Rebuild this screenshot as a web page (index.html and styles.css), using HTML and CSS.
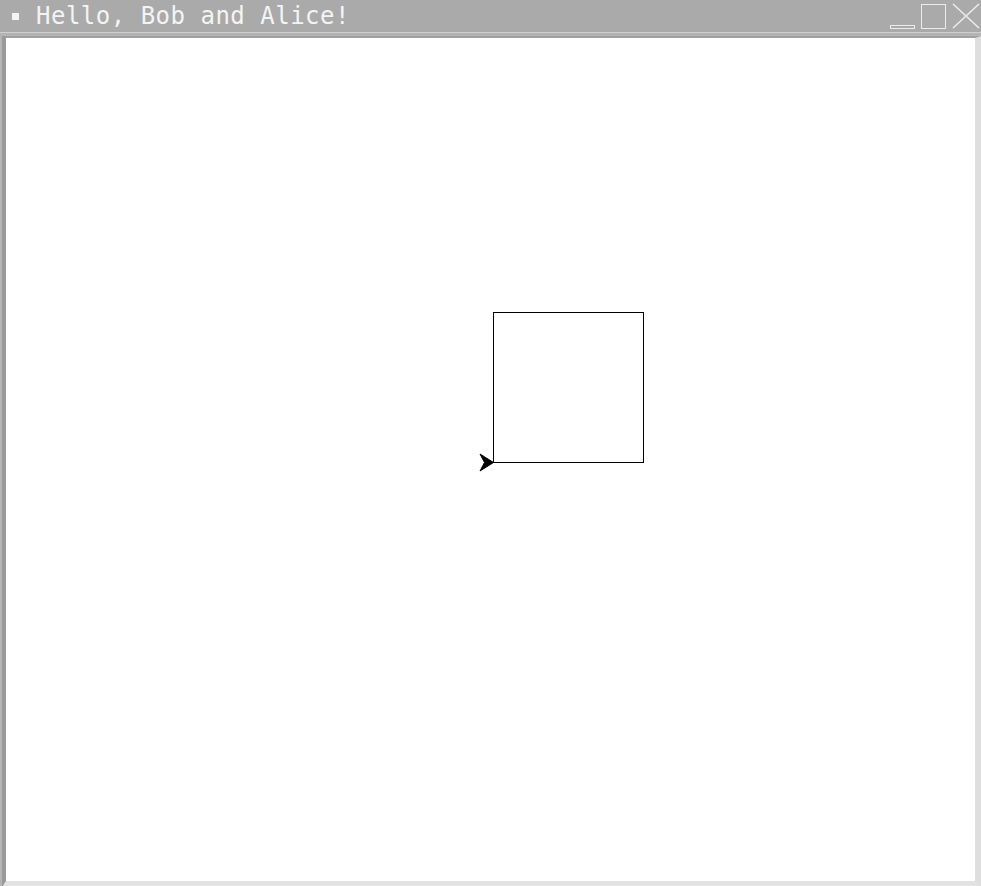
FILE: index.html
```html
<!DOCTYPE html>
<html>
<head>
<meta charset="utf-8">
<link rel="stylesheet" href="styles.css">
</head>
<body>
<div class="window">
  <div class="titlebar">
    <span class="bullet"></span>
    <span class="title">Hello, Bob and Alice!</span>
    <div class="buttons">
      <span class="btn-min"></span>
      <span class="btn-max"></span>
      <svg class="btn-close" width="28" height="26" viewBox="0 0 28 26"><path d="M1 1 L27 25 M27 1 L1 25" stroke="#ececec" stroke-width="1.5" fill="none"/></svg>
    </div>
  </div>
  <div class="frame">
    <div class="canvas">
      <svg class="drawing" width="969" height="843" viewBox="0 0 969 843">
        <rect x="487.5" y="274.5" width="150" height="150" fill="none" stroke="#000" stroke-width="1"/>
        <path d="M487.5 424.5 L474 416 L478.5 424.5 L474 433 Z" fill="#000" stroke="#000" stroke-width="1"/>
      </svg>
    </div>
  </div>
</div>
</body>
</html>
```
FILE: styles.css
```css
html, body {
  margin: 0;
  padding: 0;
  background: #ffffff;
}
.window {
  width: 981px;
  height: 886px;
  display: flex;
  flex-direction: column;
  background: #aaaaaa;
}
.titlebar {
  height: 32px;
  display: flex;
  align-items: center;
  background: #aaaaaa;
  color: #f4f4f4;
  font-family: "DejaVu Sans Mono", monospace;
  font-size: 24px;
  flex: none;
}
.bullet {
  width: 7px;
  height: 7px;
  background: #f4f4f4;
  margin-left: 12px;
  margin-right: 17px;
}
.title {
  line-height: 32px;
  letter-spacing: 0.5px;
}
.buttons {
  margin-left: auto;
  display: flex;
  align-items: flex-end;
  height: 29px;
  padding-top: 2px;
  gap: 6px;
  margin-right: 1px;
}
.btn-min {
  width: 23px;
  height: 2px;
  border: 1px solid #ececec;
  margin-bottom: 3px;
}
.btn-max {
  width: 23px;
  height: 23px;
  border: 1px solid #ececec;
  margin-bottom: 3px;
}
.btn-close {
  margin-bottom: 3px;
}
.frame {
  flex: 1;
  border-top: 1px solid #cfcfcf;
  padding: 3px 0 0 0;
  background: #b4b4b4;
  display: flex;
}
.canvas {
  flex: 1;
  margin-left: 2px;
  border-left: 4px solid #9a9a9a;
  border-right: 6px solid #dedede;
  border-bottom: 6px solid #e2e2e2;
  border-top: 2px solid #a0a0a0;
  background: #ffffff;
  overflow: hidden;
}
.drawing {
  display: block;
}
```
